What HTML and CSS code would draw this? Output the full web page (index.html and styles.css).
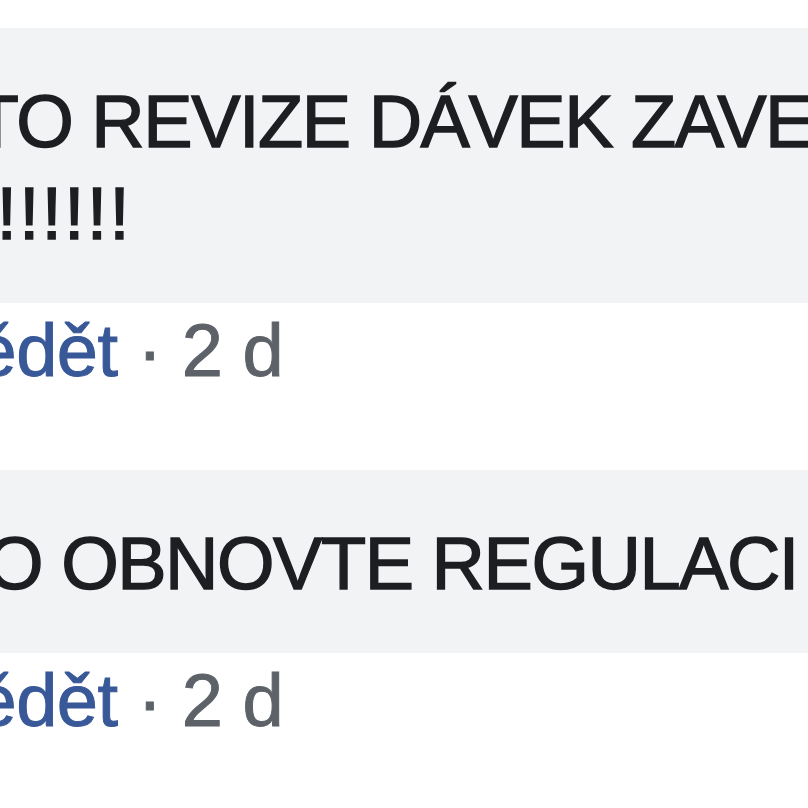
FILE: index.html
```html
<!DOCTYPE html>
<html lang="cs">
<head>
<meta charset="utf-8">
<title>Komentáře</title>
<link rel="stylesheet" href="styles.css">
</head>
<body>
<div class="feed">
  <div class="comment">
    <div class="bubble">PROTO REVIZE DÁVEK ZAVEĎTE, ANO<span class="bang">!!!!!!!</span></div>
    <div class="meta"><a class="link" href="#">Odpovědět</a> · 2 d</div>
  </div>
  <div class="comment">
    <div class="bubble">NO TO OBNOVTE REGULACI CEN!</div>
    <div class="meta"><a class="link" href="#">Odpovědět</a> · 2 d</div>
  </div>
</div>
</body>
</html>
```
FILE: styles.css
```css
html, body {
  margin: 0;
  padding: 0;
  overflow: hidden;
  background: #ffffff;
}

body {
  font-family: "Liberation Sans", Arial, sans-serif;
  font-size: 74px;
  line-height: 92px;
  color: #1c1e21;
}

.feed {
  margin-left: -300px;
  padding-top: 28px;
}

.comment + .comment {
  margin-top: 73px;
}

.bubble {
  width: 1240px;
  padding: 48px 60px 43px 118px;
  background: #f2f3f5;
  border-radius: 104px;
  letter-spacing: -1.5px;
  color: #1c1e21;
  -webkit-text-stroke: 1.4px #1c1e21;
}

.bang {
  letter-spacing: 2px;
}

.meta {
  margin-top: 2px;
  padding-left: 60px;
  color: #5d6269;
  letter-spacing: -0.5px;
  white-space: nowrap;
  -webkit-text-stroke: 1px #5d6269;
}

.link {
  color: #385898;
  text-decoration: none;
  -webkit-text-stroke: 1px #385898;
}
```
